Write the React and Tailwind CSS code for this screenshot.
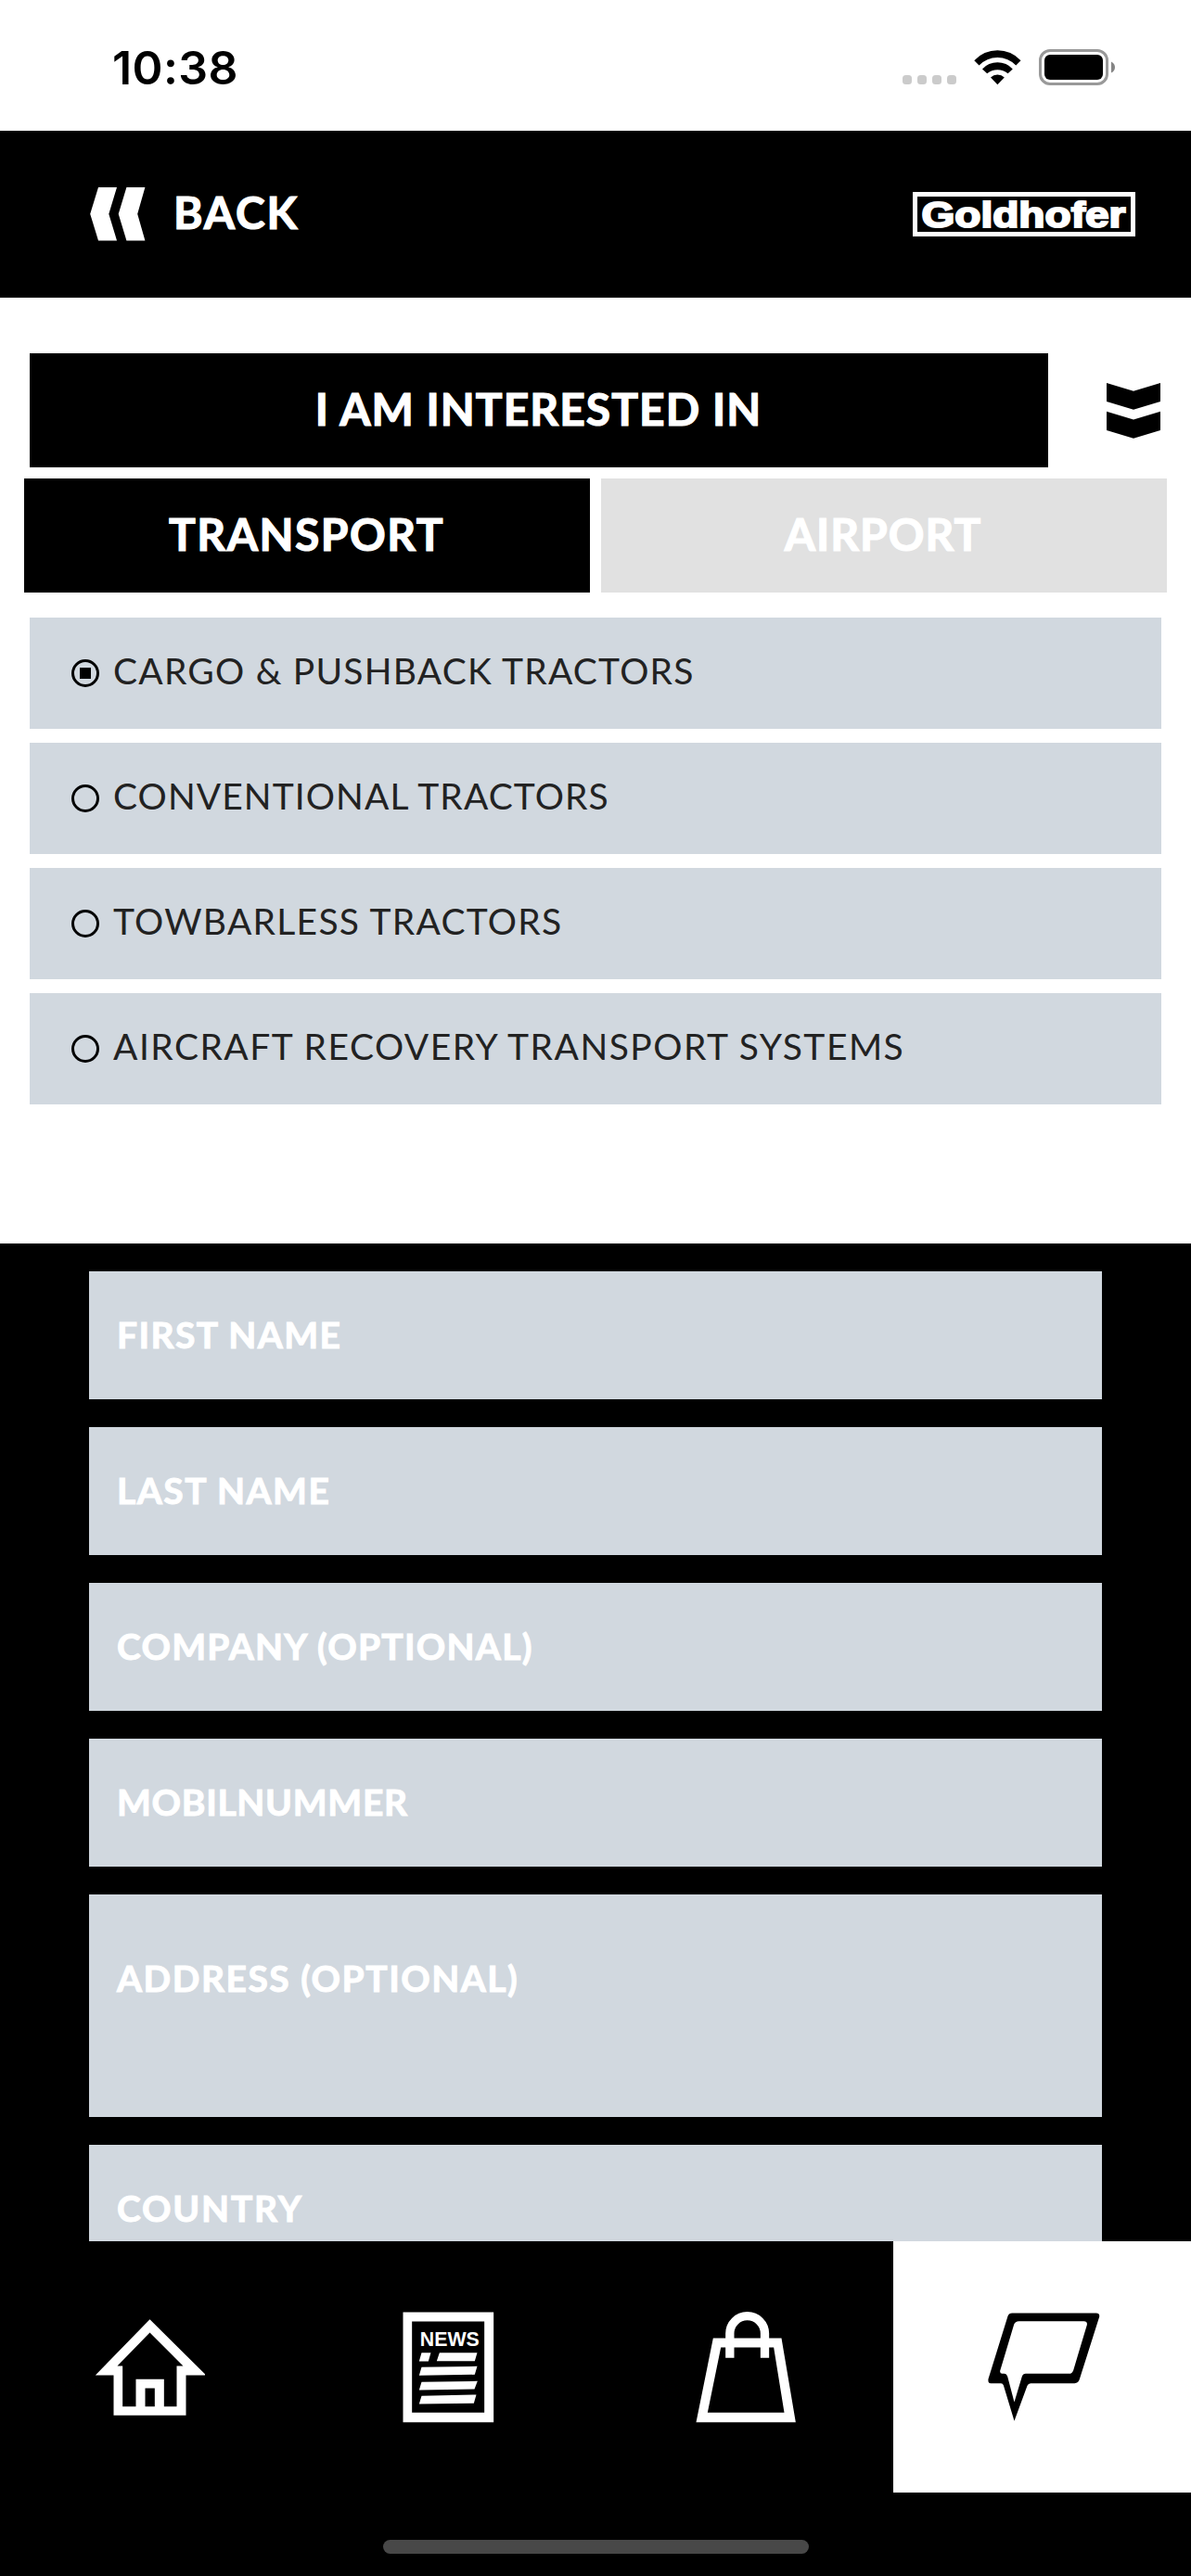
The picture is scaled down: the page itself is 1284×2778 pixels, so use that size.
import React from "react";

const options = [
  { label: "CARGO & PUSHBACK TRACTORS", tracking: "tracking-[1.22px]", selected: true },
  { label: "CONVENTIONAL TRACTORS", tracking: "tracking-[1.08px]" },
  { label: "TOWBARLESS TRACTORS", tracking: "tracking-[1.28px]" },
  { label: "AIRCRAFT RECOVERY TRANSPORT SYSTEMS", tracking: "tracking-[1.48px]" },
];

const fields = [
  { label: "FIRST NAME", tracking: "tracking-[1.4px]" },
  { label: "LAST NAME", tracking: "tracking-[1.5px]" },
  { label: "COMPANY (OPTIONAL)", tracking: "tracking-[1.25px]" },
  { label: "MOBILNUMMER", tracking: "tracking-[0.7px]" },
  { label: "ADDRESS (OPTIONAL)", tracking: "tracking-[1.5px]", tall: true },
  { label: "COUNTRY", tracking: "tracking-[1.8px]" },
];

function StatusBar() {
  return (
    <div className="flex h-[141px] shrink-0 items-start bg-white pl-[121px] pr-[82px]">
      <span className="mt-[48px] font-['Inter',sans-serif] text-[50px] leading-[50px] font-semibold tracking-[0.4px] text-black">
        10:38
      </span>
      <div className="mt-[53px] ml-auto flex h-[39px]">
        <div className="mt-[28px] flex gap-[6px]">
          {[0, 1, 2, 3].map((i) => (
            <span key={i} className="size-[10px] rounded-[3.5px] bg-[#cbcbcb]" />
          ))}
        </div>
        <svg className="mt-px ml-[19px]" width="51" height="38" viewBox="0 0 51 38">
          <path d="M0.3 11.3A34 34 0 0 1 50.5 11.3L45.3 16.5A27.6 27.6 0 0 0 5.5 16.5Z" />
          <path d="M9 20.5A22 22 0 0 1 41.8 20.5L36.6 25.3A17.7 17.7 0 0 0 14.2 25.3Z" />
          <path d="M18 29.5A10.5 10.5 0 0 1 32.8 29.5L25.4 37.3Z" />
        </svg>
        <svg className="ml-[19px]" width="82" height="39" viewBox="0 0 82 39">
          <rect x="1.5" y="1.5" width="72" height="36" rx="10.5" fill="none" stroke="#999" strokeWidth="3" />
          <rect x="6" y="6" width="63" height="27" rx="6" />
          <path d="M78 13.5Q82 15.5 82 19.5Q82 23.5 78 25.5Z" fill="#858585" />
        </svg>
      </div>
    </div>
  );
}

function Logo() {
  return (
    <svg className="mt-[66px]" width="240" height="48" viewBox="0 0 240 48">
      <rect x="2.5" y="2.5" width="235" height="43" fill="none" stroke="#fff" strokeWidth="5" />
      <text
        x="9.5"
        y="37.5"
        textLength="220"
        lengthAdjust="spacingAndGlyphs"
        className="fill-white stroke-white font-['Liberation_Sans',sans-serif] text-[38px] font-bold"
        strokeWidth="2"
      >
        Goldhofer
      </text>
    </svg>
  );
}

function Header() {
  return (
    <header className="flex h-[180px] shrink-0 items-start justify-between bg-black pl-[97px] pr-[60px]">
      <div className="mt-[61px] flex">
        <svg width="60" height="58" viewBox="0 0 60 58" fill="#fff">
          <path d="M9 0H29L20.3 28.7L29 57.4H9L0.2 28.7Z" />
          <path d="M39.4 0H59.4L51.2 28.7L59.4 57.4H39.4L30.7 28.7Z" />
        </svg>
        <span className="mt-px ml-[30px] text-[48px] leading-[52px] font-bold tracking-[1.8px] text-white [-webkit-text-stroke:1.2px_white]">
          BACK
        </span>
      </div>
      <Logo />
    </header>
  );
}

function Radio({ selected }) {
  return (
    <span className="flex size-[30px] items-center justify-center rounded-full border-3 border-black">
      {selected && <span className="size-[12px] bg-black" />}
    </span>
  );
}

function Interests() {
  return (
    <section className="h-[1020px] shrink-0 bg-white pt-[60px]">
      <div className="flex pl-[32px]">
        <h1 className="flex h-[123px] w-[1098px] items-center justify-center bg-black pr-px pb-[4px] text-[48px] font-bold tracking-[1.03px] text-white [-webkit-text-stroke:1.2px_white]">
          I AM INTERESTED IN
        </h1>
        <svg className="mt-[32px] ml-[63px]" width="58" height="60" viewBox="0 0 58 60">
          <path d="M0 0L29 8.8L58 0V20L29 28.7L0 20Z" />
          <path d="M0 30.7L29 39.4L58 30.7V51L29 59.7L0 51Z" />
        </svg>
      </div>
      <div className="mt-[12px] grid grid-cols-2 gap-[12px] px-[26px] text-[48px] font-bold text-white [-webkit-text-stroke:1.2px_white]">
        <div className="flex h-[123px] items-center justify-center bg-black pr-px pb-[4px] tracking-[1.5px]">TRANSPORT</div>
        <div className="flex h-[123px] items-center justify-center bg-[#e1e1e1] pr-[2px] pb-[4px] tracking-[1px]">AIRPORT</div>
      </div>
      <div className="mt-[27px] flex flex-col gap-[15px] px-[32px]">
        {options.map((o) => (
          <div key={o.label} className="flex h-[120px] items-center bg-[#d1d8df] pl-[45px]">
            <Radio selected={o.selected} />
            <span className={`ml-[15px] pb-[5px] text-[39px] text-[#222] ${o.tracking}`}>{o.label}</span>
          </div>
        ))}
      </div>
    </section>
  );
}

function ContactForm() {
  return (
    <section className="flex h-[1076px] shrink-0 flex-col gap-[30px] overflow-hidden bg-black px-[96px] pt-[30px]">
      {fields.map((f) => (
        <div
          key={f.label}
          className={`flex w-full shrink-0 bg-[#d1d8df] pl-[30px] text-[39px] leading-[46px] font-bold text-white [-webkit-text-stroke:1px_white] ${
            f.tall ? "h-[240px] items-start pt-[67px]" : "h-[138px] items-center pb-[3px]"
          }`}
        >
          <span className={f.tracking}>{f.label}</span>
        </div>
      ))}
    </section>
  );
}

function HomeIcon() {
  return (
    <svg width="120" height="120" viewBox="61.5 97.5 360 360" fill="#fff">
      <path
        fillRule="evenodd"
        d="M243 122L425 303H360V433H126V303H67ZM243 165L138 273H155V404H198V316H289V404H330V273H351ZM228 345V404H259V345Z"
      />
    </svg>
  );
}

function NewsIcon() {
  return (
    <svg width="120" height="120" viewBox="34.5 97.5 360 360" fill="#fff">
      <path fillRule="evenodd" d="M72 99H365V455H72ZM101 129V424H335V129Z" />
      <text
        x="127"
        y="207"
        textLength="192"
        lengthAdjust="spacingAndGlyphs"
        className="font-['Liberation_Sans',sans-serif] text-[66px] font-bold"
      >
        NEWS
      </text>
      <path d="M132 230H162L154 258H124ZM190 230H312L304 257H181ZM132 277L312 274L304 301L124 304ZM132 325L313 322L303 348L124 351ZM132 370L309 366L301 394L124 396Z" />
    </svg>
  );
}

function BagIcon() {
  return (
    <svg width="120" height="120" viewBox="37.5 97.5 360 360" fill="#fff">
      <path fillRule="evenodd" d="M115 183H336L382 455H60ZM140 213L97 424H345L311 213Z" />
      <path d="M169 247V168A56.5 56.5 0 0 1 282 168V247" fill="none" stroke="#fff" strokeWidth="28" />
    </svg>
  );
}

function ChatIcon() {
  return (
    <svg className="overflow-visible" width="120" height="120" viewBox="370.5 277.5 360 360">
      <path
        fillRule="evenodd"
        d="M452 282H724Q736 282 734 294L670 496Q666 509 654 509H512Q504 509 501 517L459 631L424 515Q422 509 416 509H383Q373 509 375 495L438 292Q442 282 452 282ZM474 308Q462 308 458 319L413 469Q412 478 420 478H427Q434 478 437 487L459 570L484 487Q487 478 496 478H636Q646 478 650 467L694 320Q696 308 684 308Z"
      />
    </svg>
  );
}

const tabs = [{ Icon: HomeIcon }, { Icon: NewsIcon }, { Icon: BagIcon }, { Icon: ChatIcon, active: true }];

export default function App() {
  return (
    <div className="flex h-[2778px] w-[1284px] flex-col overflow-hidden bg-black font-['Lato',sans-serif]">
      <StatusBar />
      <Header />
      <Interests />
      <ContactForm />
      <nav className="grid h-[271px] shrink-0 grid-cols-4 bg-black">
        {tabs.map(({ Icon, active }, i) => (
          <div key={i} className={`flex items-center justify-center ${active ? "bg-white" : ""}`}>
            <Icon />
          </div>
        ))}
      </nav>
      <div className="mt-[51px] ml-[413px] h-[15px] w-[459px] shrink-0 rounded-full bg-[#484848]" />
    </div>
  );
}
